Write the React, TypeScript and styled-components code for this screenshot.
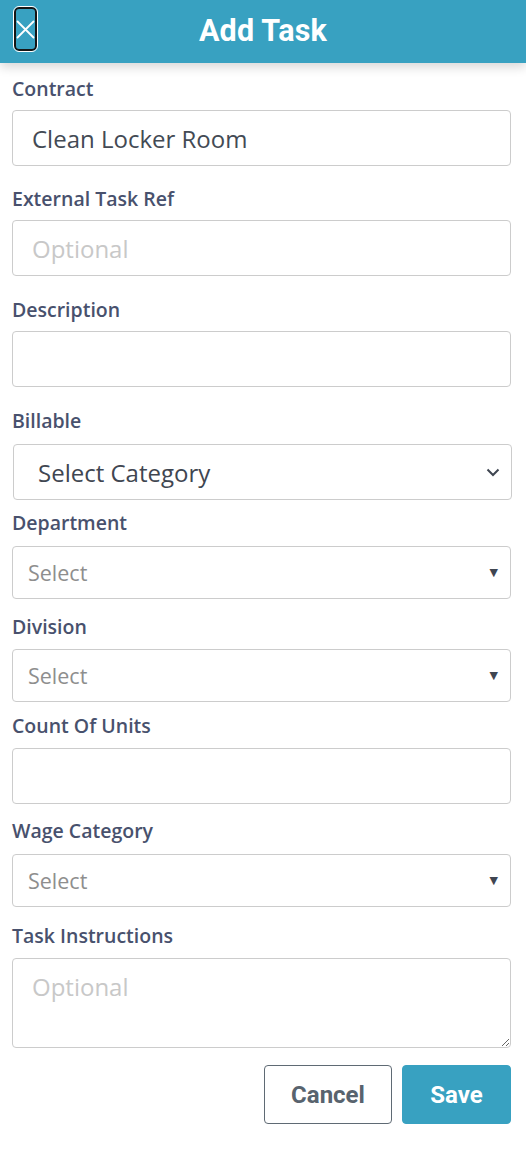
import React from "react";
import styled, { createGlobalStyle } from "styled-components";

const Global = createGlobalStyle`
  html, body { margin: 0; padding: 0; background: #fff; }
  body { font-family: "Open Sans", "Liberation Sans", sans-serif; }
  * { box-sizing: border-box; }
`;

const Page = styled.div`
  width: 526px;
  min-height: 1168px;
  background: #fff;
`;

const Header = styled.header`
  position: relative;
  height: 63px;
  background: #38a1c1;
  display: flex;
  align-items: center;
  justify-content: center;
  box-shadow: 0 4px 10px rgba(0, 0, 0, 0.16);
`;

const Title = styled.h1`
  margin: 0 0 2px 0;
  font-family: Roboto, "Liberation Sans", sans-serif;
  font-weight: 700;
  font-size: 30.5px;
  color: #fff;
  letter-spacing: 0.2px;
`;

const CloseButton = styled.button`
  position: absolute;
  left: 14px;
  top: 7px;
  width: 23px;
  height: 44px;
  padding: 0;
  background: transparent;
  border: 2px solid #151515;
  border-radius: 5px;
  outline: 1.5px solid #fff;
  outline-offset: 0;
  display: flex;
  align-items: center;
  justify-content: center;
`;

const Form = styled.form`
  padding: 14px 15px 0 12px;
  display: flex;
  flex-direction: column;
`;

const Field = styled.div<{ $gap: number; $after: number }>`
  display: flex;
  flex-direction: column;
  gap: ${(p) => p.$gap}px;
  margin-bottom: ${(p) => p.$after}px;
`;

const Label = styled.label`
  font-family: "Open Sans", sans-serif;
  font-weight: 600;
  font-size: 19.5px;
  line-height: 24px;
  color: #48516d;
`;

const TextInput = styled.input`
  width: 499px;
  height: 56px;
  border: 1px solid #cccccc;
  border-radius: 4px;
  padding: 0 19px;
  font-family: "Open Sans", sans-serif;
  font-size: 24px;
  color: #434a54;
  background: #fff;
  outline: none;
  &::placeholder { color: #c8c8c8; }
`;

const NativeSelect = styled.div`
  width: 499px;
  height: 56px;
  margin-left: 1px;
  border: 1px solid #cccccc;
  border-radius: 4px;
  padding: 0 11px 0 24px;
  display: flex;
  align-items: center;
  justify-content: space-between;
  font-family: "Open Sans", sans-serif;
  font-size: 24px;
  color: #3f4651;
`;

const CustomSelect = styled.div`
  width: 499px;
  height: 53px;
  border: 1px solid #cccccc;
  border-radius: 4px;
  padding: 0 12px 0 15px;
  display: flex;
  align-items: center;
  justify-content: space-between;
  font-family: "Open Sans", sans-serif;
  font-size: 21.5px;
  color: #8e8e8e;
`;

const Caret = styled.span`
  font-size: 11px;
  color: #3f4651;
  font-family: "DejaVu Sans", sans-serif;
`;

const TextArea = styled.textarea`
  width: 499px;
  height: 90px;
  border: 1px solid #cccccc;
  border-radius: 4px;
  padding: 11px 19px;
  font-family: "Open Sans", sans-serif;
  font-size: 24px;
  color: #434a54;
  outline: none;
  resize: vertical;
  display: block;
  &::placeholder { color: #c8c8c8; }
`;

const Actions = styled.div`
  display: flex;
  justify-content: flex-end;
  gap: 10px;
  margin-top: 17px;
  width: 499px;
`;

const Button = styled.button<{ $primary?: boolean }>`
  height: 59px;
  padding: 0;
  width: ${(p) => (p.$primary ? 109 : 128)}px;
  border-radius: 4px;
  font-family: Roboto, "Liberation Sans", sans-serif;
  font-weight: 700;
  font-size: 24px;
  border: ${(p) => (p.$primary ? "1px solid #38a1c1" : "1px solid #5f6a74")};
  background: ${(p) => (p.$primary ? "#38a1c1" : "#fff")};
  color: ${(p) => (p.$primary ? "#fff" : "#58636e")};
`;

const Chevron = () => (
  <svg width="14" height="9" viewBox="0 0 14 9">
    <path d="M1.5 1.5 L7 7 L12.5 1.5" fill="none" stroke="#3f4651" strokeWidth="2" />
  </svg>
);

const XIcon = () => (
  <svg width="19" height="19" viewBox="0 0 19 19">
    <path d="M1.5 1.5 L17.5 17.5 M17.5 1.5 L1.5 17.5" stroke="#fff" strokeWidth="1.8" strokeLinecap="round" />
  </svg>
);

export default function App() {
  return (
    <Page>
      <Global />
      <Header>
        <CloseButton aria-label="Close">
          <XIcon />
        </CloseButton>
        <Title>Add Task</Title>
      </Header>
      <Form>
        <Field $gap={9} $after={21}>
          <Label>Contract</Label>
          <TextInput defaultValue="Clean Locker Room" />
        </Field>
        <Field $gap={9} $after={22}>
          <Label>External Task Ref</Label>
          <TextInput placeholder="Optional" />
        </Field>
        <Field $gap={9} $after={22}>
          <Label>Description</Label>
          <TextInput />
        </Field>
        <Field $gap={11} $after={11}>
          <Label>Billable</Label>
          <NativeSelect>
            <span>Select Category</span>
            <Chevron />
          </NativeSelect>
        </Field>
        <Field $gap={11} $after={16}>
          <Label>Department</Label>
          <CustomSelect>
            <span>Select</span>
            <Caret>▼</Caret>
          </CustomSelect>
        </Field>
        <Field $gap={10} $after={12}>
          <Label>Division</Label>
          <CustomSelect>
            <span>Select</span>
            <Caret>▼</Caret>
          </CustomSelect>
        </Field>
        <Field $gap={10} $after={15}>
          <Label>Count Of Units</Label>
          <TextInput />
        </Field>
        <Field $gap={11} $after={17}>
          <Label>Wage Category</Label>
          <CustomSelect>
            <span>Select</span>
            <Caret>▼</Caret>
          </CustomSelect>
        </Field>
        <Field $gap={10} $after={0}>
          <Label>Task Instructions</Label>
          <TextArea placeholder="Optional" />
        </Field>
        <Actions>
          <Button type="button">Cancel</Button>
          <Button type="button" $primary>
            Save
          </Button>
        </Actions>
      </Form>
    </Page>
  );
}
